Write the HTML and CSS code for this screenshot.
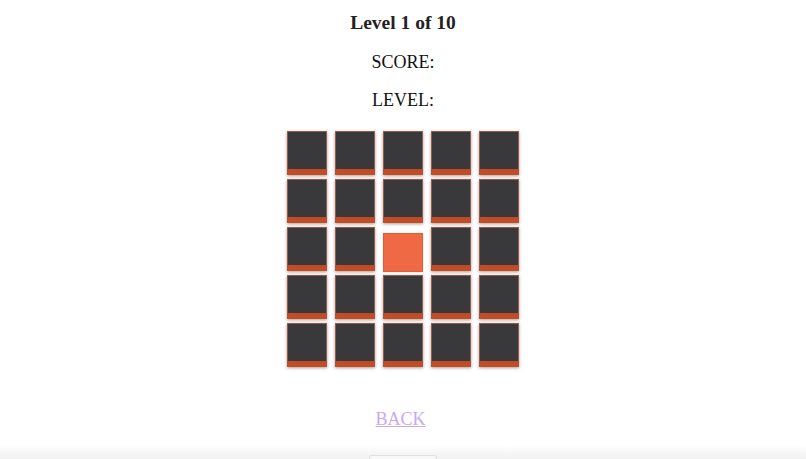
FILE: index.html
```html
<!DOCTYPE html>
<html>
<head>
<meta charset="utf-8">
<link rel="stylesheet" href="styles.css">
</head>
<body>
<div class="page">
  <h1 class="title">Level 1 of 10</h1>
  <p class="stat">SCORE:</p>
  <p class="stat">LEVEL:</p>
  <div class="board">
    <div class="tile"></div><div class="tile"></div><div class="tile"></div><div class="tile"></div><div class="tile"></div>
    <div class="tile"></div><div class="tile"></div><div class="tile"></div><div class="tile"></div><div class="tile"></div>
    <div class="tile"></div><div class="tile"></div><div class="tile lit"></div><div class="tile"></div><div class="tile"></div>
    <div class="tile"></div><div class="tile"></div><div class="tile"></div><div class="tile"></div><div class="tile"></div>
    <div class="tile"></div><div class="tile"></div><div class="tile"></div><div class="tile"></div><div class="tile"></div>
  </div>
  <a class="back" href="#">BACK</a>
</div>
<div class="footer"><div class="tab"></div></div>
</body>
</html>
```
FILE: styles.css
```css
html, body {
  margin: 0;
  padding: 0;
  background: #ffffff;
}
body {
  font-family: "Liberation Serif", "Times New Roman", serif;
  color: #111;
  height: 459px;
  position: relative;
  overflow: hidden;
}
.page {
  display: flex;
  flex-direction: column;
  align-items: center;
  padding-top: 11px;
}
.title {
  font-size: 19.5px;
  font-weight: bold;
  margin: 0;
  line-height: 24px;
  color: #222;
}
.stat {
  font-size: 18px;
  margin: 0;
  line-height: 22px;
  margin-top: 16px;
  color: #111;
}
.board {
  display: grid;
  grid-template-columns: repeat(5, 40px);
  grid-auto-rows: 44px;
  column-gap: 8px;
  row-gap: 4px;
  margin-top: 20px;
}
.tile {
  box-sizing: border-box;
  width: 40px;
  height: 44px;
  background: #39393b;
  border: 1px solid #9c5a45;
  border-bottom: 6px solid #c34b25;
  box-shadow: 0 1px 3px rgba(0, 0, 0, 0.38);
}
.tile.lit {
  background: #ee6944;
  border: 1px solid #d9603d;
  height: 39px;
  margin-top: 6px;
  box-shadow: 0 0 2px rgba(0, 0, 0, 0.15);
}
.back {
  margin-top: 41px;
  margin-right: 5px;
  font-size: 18px;
  line-height: 22px;
  color: #c7a9ee;
  text-decoration: underline;
}
.footer {
  position: absolute;
  left: 0;
  right: 0;
  bottom: 0;
  height: 14px;
  background: linear-gradient(#ffffff, #f0f0f0);
  display: flex;
  justify-content: center;
  align-items: flex-end;
}
.tab {
  width: 66px;
  height: 3px;
  border: 1px solid #e0e0e0;
  border-bottom: none;
  border-radius: 3px 3px 0 0;
  background: #f8f8f8;
}
```
